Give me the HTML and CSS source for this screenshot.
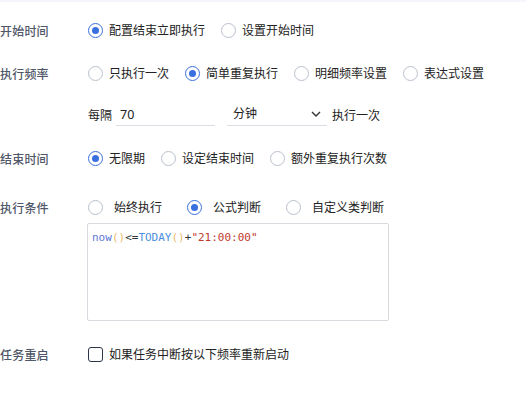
FILE: index.html
```html
<!DOCTYPE html>
<html lang="zh">
<head>
<meta charset="utf-8">
<link rel="stylesheet" href="styles.css">
</head>
<body>
<div class="topband"></div>
<div class="form">
  <div class="row r1">
    <div class="label">开始时间</div>
    <div class="opts">
      <span class="opt"><span class="radio on"></span>配置结束立即执行</span>
      <span class="opt"><span class="radio"></span>设置开始时间</span>
    </div>
  </div>
  <div class="row r2">
    <div class="label">执行频率</div>
    <div class="opts">
      <span class="opt"><span class="radio"></span>只执行一次</span>
      <span class="opt"><span class="radio on"></span>简单重复执行</span>
      <span class="opt"><span class="radio"></span>明细频率设置</span>
      <span class="opt"><span class="radio"></span>表达式设置</span>
    </div>
  </div>
  <div class="row r3">
    <div class="label"></div>
    <div class="interval">
      <span>每隔</span>
      <span class="input">70</span>
      <span class="select">分钟
        <svg class="chev" width="10" height="6" viewBox="0 0 10 6"><path d="M1 1 L5 5 L9 1" fill="none" stroke="#333" stroke-width="1.4"/></svg>
      </span>
      <span class="after">执行一次</span>
    </div>
  </div>
  <div class="row r4">
    <div class="label">结束时间</div>
    <div class="opts">
      <span class="opt"><span class="radio on"></span>无限期</span>
      <span class="opt"><span class="radio"></span>设定结束时间</span>
      <span class="opt"><span class="radio"></span>额外重复执行次数</span>
    </div>
  </div>
  <div class="row r5">
    <div class="label">执行条件</div>
    <div class="opts wide">
      <span class="opt"><span class="radio"></span>始终执行</span>
      <span class="opt"><span class="radio on"></span>公式判断</span>
      <span class="opt"><span class="radio"></span>自定义类判断</span>
    </div>
  </div>
  <div class="row r-code">
    <div class="label"></div>
    <div class="code"><span class="fn">now</span><span class="par">()</span><span class="op">&lt;=</span><span class="fn2">TODAY</span><span class="par">()</span><span class="op">+</span><span class="str">"21:00:00"</span></div>
  </div>
  <div class="row r6">
    <div class="label">任务重启</div>
    <div class="opts">
      <span class="opt"><span class="check"></span>如果任务中断按以下频率重新启动</span>
    </div>
  </div>
</div>
</body>
</html>
```

FILE: styles.css
```css
html, body {
  margin: 0;
  padding: 0;
  background: #fff;
}
body {
  font-family: "Noto Sans CJK SC", "Noto Sans", sans-serif;
  font-size: 12px;
  color: #222;
  width: 526px;
  height: 397px;
  overflow: hidden;
}
.topband {
  height: 2px;
  background: #f6f5fb;
}
.form {
  display: flex;
  flex-direction: column;
}
.row {
  display: flex;
  align-items: center;
  height: 28px;
}
.r1 { margin-top: 14px; }
.r2 { margin-top: 15px; }
.r3 { margin-top: 14px; }
.r4 { margin-top: 15px; }
.r5 { margin-top: 21px; }
.r-code { margin-top: 2px; height: auto; align-items: flex-start; }
.r6 { margin-top: 19px; }
.label {
  width: 88px;
  flex: none;
  color: #4f5768;
  font-weight: 500;
  letter-spacing: 0.2px;
}
.opts {
  display: flex;
  align-items: center;
  gap: 16px;
}
.opt {
  display: flex;
  align-items: center;
  gap: 6px;
  line-height: 16px;
}
.opts.wide { gap: 25px; }
.opts.wide .opt { gap: 11px; }
.radio {
  width: 15px;
  height: 15px;
  box-sizing: border-box;
  border: 1px solid #b9bfcc;
  border-radius: 50%;
  background: #fff;
  position: relative;
  flex: none;
}
.radio.on {
  border: 1.5px solid #3a6fe0;
}
.radio.on::after {
  content: "";
  position: absolute;
  left: 50%;
  top: 50%;
  width: 7px;
  height: 7px;
  margin: -3.5px 0 0 -3.5px;
  border-radius: 50%;
  background: #3a6fe0;
}
.check {
  width: 15px;
  height: 15px;
  box-sizing: border-box;
  border: 1.5px solid #2d3447;
  border-radius: 3px;
  flex: none;
}
.interval {
  display: flex;
  align-items: center;
  height: 28px;
  line-height: 16px;
}
.input {
  margin-left: 4px;
  width: 99px;
  height: 21px;
  box-sizing: border-box;
  border-bottom: 1px solid #dcdde4;
  padding: 2px 0 0 4px;
  font-family: "Noto Sans", "Noto Sans CJK SC", sans-serif;
  font-size: 12.5px;
  line-height: 16px;
}
.select {
  margin-left: 12px;
  width: 100px;
  height: 21px;
  box-sizing: border-box;
  border-bottom: 1px solid #dcdde4;
  padding: 0 0 0 6px;
  display: flex;
  align-items: flex-start;
  line-height: 16px;
  position: relative;
}
.chev {
  position: absolute;
  left: 84px;
  top: 6px;
}
.after {
  margin-left: 5px;
}
.code {
  width: 302px;
  height: 98px;
  box-sizing: border-box;
  margin-left: -1px;
  border: 1px solid #d9d9df;
  border-radius: 2px;
  padding: 6px 4px;
  font-family: "DejaVu Sans Mono", monospace;
  font-size: 11px;
  line-height: 16px;
  color: #333;
}
.fn { color: #5d77d6; }
.fn2 { color: #4a8fe0; }
.par { color: #e8bb6a; }
.op { color: #333; }
.str { color: #c23a2e; }
```
